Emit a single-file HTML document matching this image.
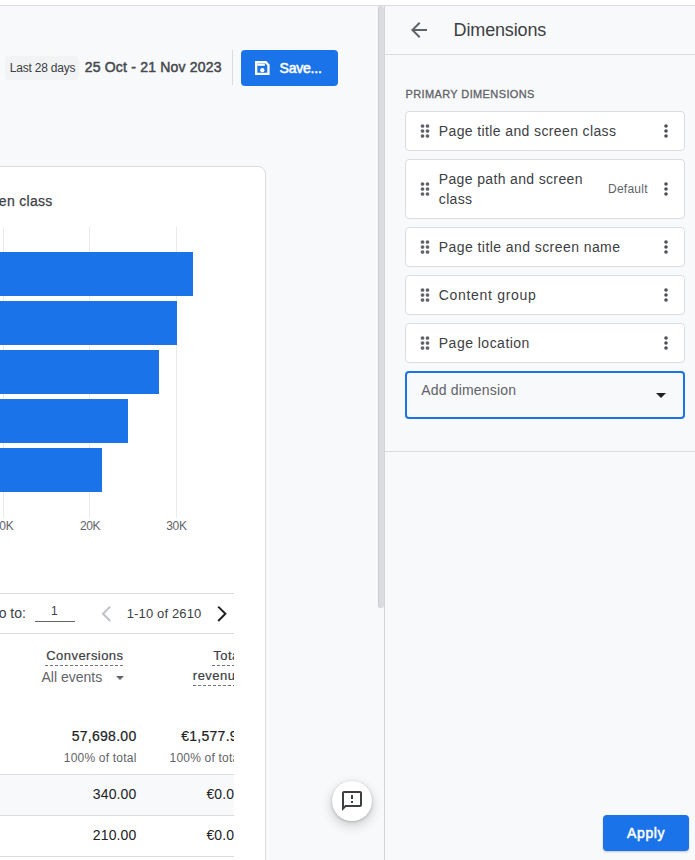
<!DOCTYPE html>
<html><head><meta charset="utf-8">
<style>
*{box-sizing:border-box;margin:0;padding:0}
html,body{width:695px;height:860px;overflow:hidden;background:#f8f9fa;font-family:"Liberation Sans",sans-serif;color:#3c4043;position:relative}
.abs{position:absolute}
.t{position:absolute;white-space:nowrap;line-height:1}
</style></head><body>
<div class="abs" style="left:0px;top:0px;width:695px;height:5px;background:#fff"></div>
<div class="abs" style="left:0px;top:5px;width:695px;height:1px;background:#dadce0"></div>
<div class="abs" style="left:5px;top:56px;width:74px;height:24px;background:#f1f3f4;border-radius:4px"></div>
<div class="t" style="left:9.70px;top:61.84px;font-size:12px;color:#3c4043;letter-spacing:-0.2px">Last 28 days</div>
<div class="t" style="left:84.70px;top:60.05px;font-size:14px;color:#46494e;letter-spacing:0.2px;-webkit-text-stroke:0.5px #46494e">25 Oct - 21 Nov 2023</div>
<div class="abs" style="left:232px;top:50px;width:1px;height:35px;background:#dadce0"></div>
<div class="abs" style="left:241px;top:50px;width:97px;height:36px;background:#1a73e8;border-radius:4px"></div>
<svg class="abs" style="left:252px;top:58px" width="20" height="20" viewBox="252 58 20 20"><path fill="#fff" fill-rule="evenodd" d="M255 61H266.2L269.6 64.4V75H255ZM257.3 63.3V72.7H267.3V65.4L265.2 63.3Z"/><rect fill="#fff" x="257.3" y="63.5" width="7.6" height="2.3"/><circle fill="#fff" cx="262.3" cy="70.2" r="2.15"/></svg>
<div class="t" style="left:279.50px;top:61.45px;font-size:14px;color:#fff;letter-spacing:-0.2px;-webkit-text-stroke:0.55px #fff">Save...</div>
<div class="abs" style="left:-20px;top:166px;width:286px;height:720px;background:#fff;border:1px solid #dadce0;border-radius:8px"></div>
<div class="t" style="left:-447.40px;width:500px;top:194.15px;font-size:14px;color:#3c4043;text-align:right;letter-spacing:0.3px;-webkit-text-stroke:0.25px #3c4043">screen class</div>
<div class="abs" style="left:3px;top:227px;width:1px;height:291px;background:#e8eaed"></div>
<div class="abs" style="left:89px;top:227px;width:1px;height:291px;background:#e8eaed"></div>
<div class="abs" style="left:176px;top:227px;width:1px;height:291px;background:#e8eaed"></div>
<div class="abs" style="left:0px;top:252px;width:193px;height:44px;background:#1a73e8"></div>
<div class="abs" style="left:0px;top:301px;width:177px;height:44px;background:#1a73e8"></div>
<div class="abs" style="left:0px;top:350px;width:159px;height:44px;background:#1a73e8"></div>
<div class="abs" style="left:0px;top:399px;width:128px;height:44px;background:#1a73e8"></div>
<div class="abs" style="left:0px;top:448px;width:102px;height:44px;background:#1a73e8"></div>
<div class="t" style="left:-26.8px;width:60px;text-align:center;top:519.74px;font-size:12px;color:#5f6368;letter-spacing:-0.35px">10K</div>
<div class="t" style="left:60.099999999999994px;width:60px;text-align:center;top:519.74px;font-size:12px;color:#5f6368;letter-spacing:-0.35px">20K</div>
<div class="t" style="left:146.4px;width:60px;text-align:center;top:519.74px;font-size:12px;color:#5f6368;letter-spacing:-0.35px">30K</div>
<div class="abs" style="left:0;top:0;width:234px;height:860px;overflow:hidden">
<div class="abs" style="left:0px;top:593px;width:234px;height:1px;background:#dadce0"></div>
<div class="t" style="left:-474.10px;width:500px;top:606.45px;font-size:14px;color:#3c4043;text-align:right">Go to:</div>
<div class="abs" style="left:35px;top:621px;width:40px;height:1px;background:#5f6368"></div>
<div class="t" style="left:51.00px;top:604.74px;font-size:12px;color:#3c4043">1</div>
<div class="t" style="left:126.70px;top:607.00px;font-size:13px;color:#3c4043;letter-spacing:0.15px">1-10 of 2610</div>
<div class="abs" style="left:0px;top:633px;width:234px;height:1px;background:#dadce0"></div>
<div class="t" style="left:-376.50px;width:500px;top:648.70px;font-size:13px;color:#3c4043;text-align:right;letter-spacing:0.45px;-webkit-text-stroke:0.2px #3c4043">Conversions</div>
<div class="abs" style="left:45px;top:665px;width:78px;height:1px;background:repeating-linear-gradient(90deg,#6f7378 0 3px,transparent 3px 5px)"></div>
<div class="t" style="left:41.50px;top:669.85px;font-size:14px;color:#5f6368">All events</div>
<svg class="abs" style="left:116px;top:676px" width="8" height="4" viewBox="0 0 8 4"><path fill="#5f6368" d="M0 0h8L4 4z"/></svg>
<div class="t" style="left:-257.00px;width:500px;top:648.60px;font-size:13px;color:#3c4043;text-align:right;letter-spacing:0.45px;-webkit-text-stroke:0.2px #3c4043">Total</div>
<div class="abs" style="left:212px;top:665px;width:30px;height:1px;background:repeating-linear-gradient(90deg,#6f7378 0 3px,transparent 3px 5px)"></div>
<div class="t" style="left:-257.00px;width:500px;top:668.60px;font-size:13px;color:#3c4043;text-align:right;letter-spacing:0.45px;-webkit-text-stroke:0.2px #3c4043">revenue</div>
<div class="abs" style="left:193px;top:685px;width:50px;height:1px;background:repeating-linear-gradient(90deg,#6f7378 0 3px,transparent 3px 5px)"></div>
<div class="t" style="left:-363.50px;width:500px;top:729.15px;font-size:14px;color:#202124;text-align:right;letter-spacing:0.28px;-webkit-text-stroke:0.2px #202124">57,698.00</div>
<div class="t" style="left:-363.50px;width:500px;top:751.84px;font-size:12px;color:#5f6368;text-align:right;letter-spacing:0.2px">100% of total</div>
<div class="t" style="left:-254.00px;width:500px;top:729.15px;font-size:14px;color:#202124;text-align:right;letter-spacing:0.28px;-webkit-text-stroke:0.2px #202124">€1,577.95</div>
<div class="t" style="left:-257.80px;width:500px;top:751.84px;font-size:12px;color:#5f6368;text-align:right;letter-spacing:0.2px">100% of total</div>
<div class="abs" style="left:0px;top:774px;width:234px;height:1px;background:#dadce0"></div>
<div class="abs" style="left:0px;top:775px;width:234px;height:40px;background:#f8f9fa"></div>
<div class="t" style="left:-363.50px;width:500px;top:786.95px;font-size:14px;color:#202124;text-align:right;letter-spacing:0.15px">340.00</div>
<div class="t" style="left:-257.80px;width:500px;top:786.95px;font-size:14px;color:#202124;text-align:right;letter-spacing:0.15px">€0.00</div>
<div class="abs" style="left:0px;top:815px;width:234px;height:1px;background:#dadce0"></div>
<div class="t" style="left:-363.50px;width:500px;top:827.75px;font-size:14px;color:#202124;text-align:right;letter-spacing:0.15px">210.00</div>
<div class="t" style="left:-257.80px;width:500px;top:827.75px;font-size:14px;color:#202124;text-align:right;letter-spacing:0.15px">€0.00</div>
<div class="abs" style="left:0px;top:856px;width:234px;height:1px;background:#dadce0"></div>
</div>
<svg class="abs" style="left:96px;top:600px" width="20" height="28" viewBox="96 600 20 28"><path fill="none" stroke="#bdc1c6" stroke-width="2" d="M110.2 606.6L103 613.8L110.2 621"/></svg>
<svg class="abs" style="left:210px;top:600px" width="24" height="28" viewBox="210 600 24 28"><path fill="none" stroke="#202124" stroke-width="2" d="M218.2 606.6L225.4 613.8L218.2 621"/></svg>
<div class="abs" style="left:378px;top:6px;width:6px;height:602px;background:#dadce0;border-radius:3px;box-shadow:inset 1px 0 0 #c9cbcf"></div>
<div class="abs" style="left:384px;top:6px;width:1px;height:854px;background:#d3d5d9"></div>
<div class="abs" style="left:385px;top:6px;width:310px;height:854px;background:#f8f9fa"></div>
<div class="abs" style="left:385px;top:54px;width:310px;height:1px;background:#dadce0"></div>
<div class="abs" style="left:385px;top:451px;width:310px;height:1px;background:#dadce0"></div>
<svg class="abs" style="left:407px;top:17.8px" width="24" height="24" viewBox="0 0 24 24"><path fill="#5f6368" d="M20 11H7.83l5.59-5.59L12 4l-8 8 8 8 1.41-1.41L7.83 13H20v-2z"/></svg>
<div class="t" style="left:453.60px;top:20.86px;font-size:18px;color:#3c4043;letter-spacing:-0.15px">Dimensions</div>
<div class="t" style="left:405.50px;top:88.99px;font-size:11px;color:#5f6368;letter-spacing:0.38px;-webkit-text-stroke:0.3px #5f6368">PRIMARY DIMENSIONS</div>
<div class="abs" style="left:405px;top:111px;width:280px;height:40px;background:#fff;border:1px solid #dadce0;border-radius:4px"></div>
<svg class="abs" style="left:414.5px;top:121.0px" width="20" height="20" viewBox="0 0 20 20" fill="#5f6368"><circle cx="7.5" cy="5" r="1.85"/><circle cx="7.5" cy="10" r="1.85"/><circle cx="7.5" cy="15" r="1.85"/><circle cx="12.5" cy="5" r="1.85"/><circle cx="12.5" cy="10" r="1.85"/><circle cx="12.5" cy="15" r="1.85"/></svg>
<svg class="abs" style="left:656.1px;top:121.0px" width="20" height="20" viewBox="0 0 20 20" fill="#4d5156"><circle cx="10" cy="5" r="1.8"/><circle cx="10" cy="10" r="1.8"/><circle cx="10" cy="15" r="1.8"/></svg>
<div class="t" style="left:438.80px;top:123.85px;font-size:14px;color:#3c4043;letter-spacing:0.38px">Page title and screen class</div>
<div class="abs" style="left:405px;top:159px;width:280px;height:60px;background:#fff;border:1px solid #dadce0;border-radius:4px"></div>
<svg class="abs" style="left:414.5px;top:179.0px" width="20" height="20" viewBox="0 0 20 20" fill="#5f6368"><circle cx="7.5" cy="5" r="1.85"/><circle cx="7.5" cy="10" r="1.85"/><circle cx="7.5" cy="15" r="1.85"/><circle cx="12.5" cy="5" r="1.85"/><circle cx="12.5" cy="10" r="1.85"/><circle cx="12.5" cy="15" r="1.85"/></svg>
<svg class="abs" style="left:656.1px;top:179.0px" width="20" height="20" viewBox="0 0 20 20" fill="#4d5156"><circle cx="10" cy="5" r="1.8"/><circle cx="10" cy="10" r="1.8"/><circle cx="10" cy="15" r="1.8"/></svg>
<div class="t" style="left:438.80px;top:171.95px;font-size:14px;color:#3c4043;letter-spacing:0.35px">Page path and screen</div>
<div class="t" style="left:438.80px;top:192.05px;font-size:14px;color:#3c4043;letter-spacing:0.35px">class</div>
<div class="t" style="left:608.00px;top:182.84px;font-size:12px;color:#5f6368;letter-spacing:0.25px">Default</div>
<div class="abs" style="left:405px;top:227px;width:280px;height:40px;background:#fff;border:1px solid #dadce0;border-radius:4px"></div>
<svg class="abs" style="left:414.5px;top:237.0px" width="20" height="20" viewBox="0 0 20 20" fill="#5f6368"><circle cx="7.5" cy="5" r="1.85"/><circle cx="7.5" cy="10" r="1.85"/><circle cx="7.5" cy="15" r="1.85"/><circle cx="12.5" cy="5" r="1.85"/><circle cx="12.5" cy="10" r="1.85"/><circle cx="12.5" cy="15" r="1.85"/></svg>
<svg class="abs" style="left:656.1px;top:237.0px" width="20" height="20" viewBox="0 0 20 20" fill="#4d5156"><circle cx="10" cy="5" r="1.8"/><circle cx="10" cy="10" r="1.8"/><circle cx="10" cy="15" r="1.8"/></svg>
<div class="t" style="left:438.80px;top:239.85px;font-size:14px;color:#3c4043;letter-spacing:0.43px">Page title and screen name</div>
<div class="abs" style="left:405px;top:275px;width:280px;height:40px;background:#fff;border:1px solid #dadce0;border-radius:4px"></div>
<svg class="abs" style="left:414.5px;top:285.0px" width="20" height="20" viewBox="0 0 20 20" fill="#5f6368"><circle cx="7.5" cy="5" r="1.85"/><circle cx="7.5" cy="10" r="1.85"/><circle cx="7.5" cy="15" r="1.85"/><circle cx="12.5" cy="5" r="1.85"/><circle cx="12.5" cy="10" r="1.85"/><circle cx="12.5" cy="15" r="1.85"/></svg>
<svg class="abs" style="left:656.1px;top:285.0px" width="20" height="20" viewBox="0 0 20 20" fill="#4d5156"><circle cx="10" cy="5" r="1.8"/><circle cx="10" cy="10" r="1.8"/><circle cx="10" cy="15" r="1.8"/></svg>
<div class="t" style="left:438.80px;top:287.85px;font-size:14px;color:#3c4043;letter-spacing:0.68px">Content group</div>
<div class="abs" style="left:405px;top:323px;width:280px;height:40px;background:#fff;border:1px solid #dadce0;border-radius:4px"></div>
<svg class="abs" style="left:414.5px;top:333.0px" width="20" height="20" viewBox="0 0 20 20" fill="#5f6368"><circle cx="7.5" cy="5" r="1.85"/><circle cx="7.5" cy="10" r="1.85"/><circle cx="7.5" cy="15" r="1.85"/><circle cx="12.5" cy="5" r="1.85"/><circle cx="12.5" cy="10" r="1.85"/><circle cx="12.5" cy="15" r="1.85"/></svg>
<svg class="abs" style="left:656.1px;top:333.0px" width="20" height="20" viewBox="0 0 20 20" fill="#4d5156"><circle cx="10" cy="5" r="1.8"/><circle cx="10" cy="10" r="1.8"/><circle cx="10" cy="15" r="1.8"/></svg>
<div class="t" style="left:438.80px;top:335.85px;font-size:14px;color:#3c4043;letter-spacing:0.48px">Page location</div>
<div class="abs" style="left:405px;top:371px;width:280px;height:48px;background:#f8f9fa;border:2px solid #1a73e8;border-radius:4px"></div>
<div class="t" style="left:421.30px;top:383.15px;font-size:14px;color:#5f6368;letter-spacing:0.17px">Add dimension</div>
<svg class="abs" style="left:656.4px;top:392.9px" width="10" height="5" viewBox="0 0 10 5"><path fill="#202124" d="M0 0h10L5 5z"/></svg>
<div class="abs" style="left:332px;top:781px;width:40px;height:40px;border-radius:50%;background:#fff;box-shadow:0 1px 3px rgba(60,64,67,.3),0 4px 8px 3px rgba(60,64,67,.15)"></div>
<svg class="abs" style="left:340px;top:789px" width="24" height="24" viewBox="0 0 24 24"><path fill="#3c4043" d="M20 2H4c-1.1 0-1.99.9-1.99 2L2 22l4-4h14c1.1 0 2-.9 2-2V4c0-1.1-.9-2-2-2zm0 14H5.17l-.59.59-.58.58V4h16v12zm-9-4h2v2h-2zm0-6h2v4h-2z"/></svg>
<div class="abs" style="left:603px;top:815px;width:86px;height:36px;background:#1a73e8;border-radius:4px;box-shadow:0 1px 2px rgba(60,64,67,.3)"></div>
<div class="t" style="left:627.00px;top:825.95px;font-size:14px;color:#fff;letter-spacing:0.65px;-webkit-text-stroke:0.5px #fff">Apply</div>
</body></html>
